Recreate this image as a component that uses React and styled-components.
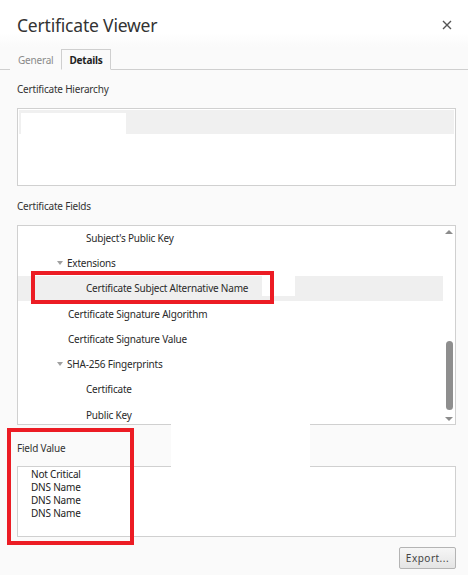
import React from 'react'
import styled, { createGlobalStyle } from 'styled-components'

const GlobalStyle = createGlobalStyle`
    html, body {
        margin: 0;
        padding: 0;
        background: #fafafa;
    }
    body {
        font-family: "Noto Sans", "Open Sans", sans-serif;
        color: #333;
    }
`

const Dialog = styled.div`
    position: relative;
    width: 468px;
    height: 575px;
    display: flex;
    flex-direction: column;
    background: #fafafa;
    overflow: hidden;
`

const Header = styled.div`
    height: 47px;
    padding: 2px 14px 0 17px;
    box-sizing: border-box;
    display: flex;
    align-items: center;
    justify-content: space-between;
    background: linear-gradient(#fff, #fff 70%, #fafafa);
`

const Title = styled.div`
    font-size: 17.5px;
    letter-spacing: -0.2px;
    color: #333;
`

const CloseButton = styled.button`
    border: none;
    background: none;
    padding: 0;
    width: 14px;
    height: 14px;
    display: flex;
    align-items: center;
    justify-content: center;
    cursor: pointer;
`

const TabBar = styled.div`
    height: 22px;
    display: flex;
    align-items: flex-end;
    padding-left: 10px;
    border-bottom: 1px solid #cfcfcf;
`

const Tab = styled.div`
    height: ${p => (p.active ? '21px' : '20px')};
    padding: 0 ${p => (p.active ? '7px' : '7px')};
    margin-bottom: -1px;
    display: flex;
    align-items: center;
    box-sizing: border-box;
    font-size: 10px;
    letter-spacing: -0.2px;
    font-weight: ${p => (p.active ? 700 : 400)};
    color: ${p => (p.active ? '#222' : '#8a8a8a')};
    border: 1px solid ${p => (p.active ? '#cfcfcf' : 'transparent')};
    border-bottom: 1px solid ${p => (p.active ? '#fafafa' : 'transparent')};
    background: #fafafa;
`

const Body = styled.div`
    flex: 1;
    display: flex;
    flex-direction: column;
    padding: 0 12px 0 17px;
    font-size: 10px;
    letter-spacing: -0.2px;
`

const SectionLabel = styled.div`
    height: ${p => p.height || '38px'};
    padding-top: ${p => p.offset || '0px'};
    box-sizing: border-box;
    display: flex;
    align-items: center;
    color: #333;
`

const Box = styled.div`
    height: ${p => p.height};
    box-sizing: border-box;
    border: 1px solid #d0d0d0;
    background: #fff;
    padding: 1px;
    overflow: hidden;
`

const HierarchyRow = styled.div`
    height: 24px;
    background: #f0f0f0;
    padding: 3px 0 0 2px;
    box-sizing: border-box;
`

const Redacted = styled.div`
    width: ${p => p.width};
    height: ${p => p.height};
    background: #fff;
`

const FieldsBox = styled.div`
    height: 200px;
    box-sizing: border-box;
    border: 1px solid #d0d0d0;
    background: #fff;
    display: flex;
    overflow: hidden;
`

const TreeList = styled.div`
    flex: 1;
    display: flex;
    flex-direction: column;
    margin-top: -1px;
`

const TreeRow = styled.div`
    flex: 0 0 25.3px;
    display: flex;
    align-items: center;
    padding-left: ${p => p.indent}px;
    background: ${p => (p.selected ? '#efefef' : 'transparent')};
    color: #2a2a2a;
    white-space: nowrap;
`

const Twisty = styled.span`
    width: 0;
    height: 0;
    margin-right: 4px;
    border-left: 3.5px solid transparent;
    border-right: 3.5px solid transparent;
    border-top: 4px solid #a0a0a0;
`

const ScrollBar = styled.div`
    width: 12px;
    display: flex;
    flex-direction: column;
    align-items: center;
    padding: 4px 0 3px;
    box-sizing: border-box;
`

const Arrow = styled.span`
    width: 0;
    height: 0;
    border-left: 4px solid transparent;
    border-right: 4px solid transparent;
    ${p => (p.up ? 'border-bottom: 4px solid #8c8c8c;' : 'border-top: 4px solid #8c8c8c;')}
`

const Track = styled.div`
    flex: 1;
    width: 100%;
    display: flex;
    justify-content: center;
    padding: 3px 0;
    box-sizing: border-box;
`

const Thumb = styled.div`
    width: 7px;
    height: 69px;
    margin-top: ${p => p.offset}px;
    border-radius: 4px;
    background: #8e8e8e;
`

const ValueBox = styled.div`
    height: 71px;
    box-sizing: border-box;
    border: 1px solid #d0d0d0;
    background: #fff;
    padding: 1px 13px;
    line-height: 13px;
    color: #222;
`

const Footer = styled.div`
    display: flex;
    justify-content: flex-end;
    padding-top: 10px;
`

const Button = styled.button`
    width: 57px;
    height: 22px;
    box-sizing: border-box;
    border: 1px solid #b4b4b4;
    border-radius: 2px;
    background: linear-gradient(#f6f6f6, #e4e4e4);
    font-family: "Noto Sans", "Open Sans", sans-serif;
    font-size: 10px;
    letter-spacing: 0.5px;
    color: #444;
    padding: 0;
`

const Annotation = styled.div`
    position: absolute;
    left: ${p => p.x}px;
    top: ${p => p.y}px;
    width: ${p => p.w}px;
    height: ${p => p.h}px;
    box-sizing: border-box;
    border: 4px solid #ec1c24;
    pointer-events: none;
`

const Patch = styled.div`
    position: absolute;
    left: ${p => p.x}px;
    top: ${p => p.y}px;
    width: ${p => p.w}px;
    height: ${p => p.h}px;
    background: #fff;
`

const fields = [
    { label: "Subject's Public Key", indent: 67 },
    { label: 'Extensions', indent: 39, open: true },
    { label: 'Certificate Subject Alternative Name', indent: 67, selected: true },
    { label: 'Certificate Signature Algorithm', indent: 49 },
    { label: 'Certificate Signature Value', indent: 49 },
    { label: 'SHA-256 Fingerprints', indent: 39, open: true },
    { label: 'Certificate', indent: 67 },
    { label: 'Public Key', indent: 67 },
]

const values = ['Not Critical', 'DNS Name', 'DNS Name', 'DNS Name']

export default function App() {
    return (
        <Dialog>
            <GlobalStyle />
            <Header>
                <Title>Certificate Viewer</Title>
                <CloseButton aria-label="Close">
                    <svg width="10" height="10" viewBox="0 0 10 10">
                        <path d="M1 1 L9 9 M9 1 L1 9" stroke="#555" strokeWidth="1.4" />
                    </svg>
                </CloseButton>
            </Header>
            <TabBar>
                <Tab>General</Tab>
                <Tab active>Details</Tab>
            </TabBar>
            <Body>
                <SectionLabel>Certificate Hierarchy</SectionLabel>
                <Box height="78px">
                    <HierarchyRow>
                        <Redacted width="105px" height="21px" />
                    </HierarchyRow>
                </Box>
                <SectionLabel height="39px">Certificate Fields</SectionLabel>
                <FieldsBox>
                    <TreeList>
                        {fields.map(f => (
                            <TreeRow key={f.label} indent={f.open ? f.indent : f.indent + 1} selected={f.selected}>
                                {f.open && <Twisty />}
                                {f.label}
                            </TreeRow>
                        ))}
                    </TreeList>
                    <ScrollBar>
                        <Arrow up />
                        <Track>
                            <Thumb offset={104} />
                        </Track>
                        <Arrow />
                    </ScrollBar>
                </FieldsBox>
                <SectionLabel height="41px" offset="5px">Field Value</SectionLabel>
                <ValueBox>
                    {values.map((v, i) => (
                        <div key={i}>{v}</div>
                    ))}
                </ValueBox>
                <Footer>
                    <Button>Export...</Button>
                </Footer>
            </Body>

            <Patch x={262} y={276} w={33} h={20} />
            <Patch x={171} y={424} w={139} h={43} />

            <Annotation x={31} y={271} w={243} h={33} />
            <Annotation x={7} y={428} w={127} h={117} />
        </Dialog>
    )
}
